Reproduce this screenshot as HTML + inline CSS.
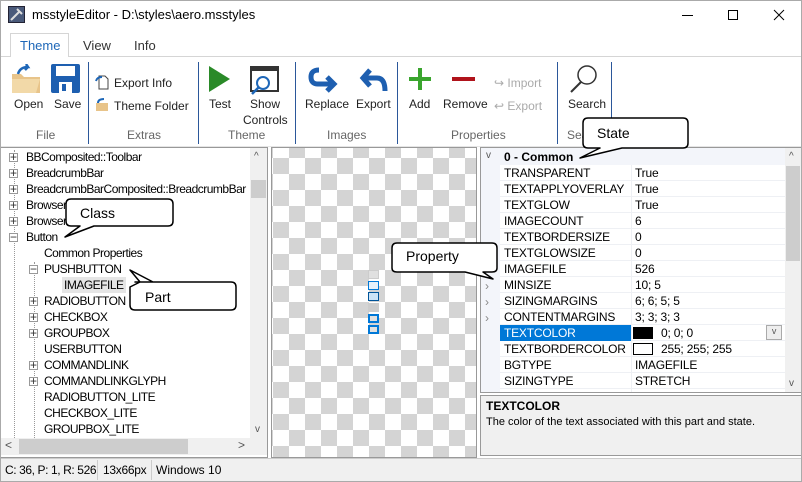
<!DOCTYPE html>
<html><head><meta charset="utf-8"><style>
*{margin:0;padding:0;box-sizing:border-box}
body{width:802px;height:482px;position:relative;overflow:hidden;background:#fff;font-family:"Liberation Sans",sans-serif;font-size:12px;color:#000}
.a{position:absolute;white-space:nowrap}
.sep{position:absolute;top:62px;width:1px;height:82px;background:#2b579a}
.gl{position:absolute;top:128px;color:#666;font-size:12px}
.bl{position:absolute;color:#222;font-size:12px}
.tree div{position:absolute;white-space:nowrap;font-size:12px;letter-spacing:-0.5px}
.pb{position:absolute;width:9px;height:9px;border:1px solid #999;background:#fff;font-size:9px;line-height:7px;text-align:center;color:#333;letter-spacing:0!important}
.row{position:absolute;left:500px;width:285px;height:16px;border-bottom:1px solid #eef0f4}
.row span{position:absolute;top:1px;font-size:12px;letter-spacing:-0.2px}
</style></head><body>
<div class="a" style="left:0;top:0;width:802px;height:482px;border:1px solid #aaa;pointer-events:none;z-index:9"></div>
<svg class="a" style="left:8px;top:6px" width="17" height="17"><rect x="0.5" y="0.5" width="16" height="16" fill="#4a5a7a" stroke="#223"/><path d="M3 14 L12 5 M9 3 L14 8" stroke="#ddd" stroke-width="2"/></svg>
<div class="a" style="left:32px;top:7px;font-size:13px">msstyleEditor - D:\styles\aero.msstyles</div>
<div class="a" style="left:682px;top:15px;width:11px;height:1px;background:#000"></div>
<div class="a" style="left:728px;top:10px;width:10px;height:10px;border:1px solid #000"></div>
<svg class="a" style="left:773px;top:9px" width="12" height="12"><path d="M1 1L11 11M11 1L1 11" stroke="#000"/></svg>
<div class="a" style="left:0;top:56px;width:802px;height:1px;background:#d5d5d5"></div>
<div class="a" style="left:10px;top:33px;width:59px;height:24px;border:1px solid #d5d5d5;border-bottom:none;background:#fff"></div>
<div class="a" style="left:20px;top:38px;color:#1e67b8;font-size:13px">Theme</div>
<div class="a" style="left:83px;top:38px;color:#333;font-size:13px">View</div>
<div class="a" style="left:134px;top:38px;color:#333;font-size:13px">Info</div>
<div class="sep" style="left:88px"></div><div class="sep" style="left:198px"></div><div class="sep" style="left:295px"></div><div class="sep" style="left:397px"></div><div class="sep" style="left:557px"></div><div class="sep" style="left:611px"></div>
<svg class="a" style="left:10px;top:64px" width="34" height="30"><path d="M2 10h9l3 3h16v16H2z" fill="#e8c48a"/><path d="M2 15h28l-4 14H2z" fill="#f2d9a8"/><path d="M8 10 q2-7 10-7 l-2-3 M18 3 l-3 3" stroke="#1e67b8" stroke-width="2.5" fill="none"/></svg>
<svg class="a" style="left:51px;top:64px" width="29" height="29"><rect x="0" y="0" width="29" height="29" rx="2" fill="#1e5fb0"/><rect x="5" y="2" width="19" height="10" fill="#fff"/><rect x="8" y="18" width="13" height="11" fill="#fff"/><rect x="11" y="20" width="4" height="7" fill="#1e5fb0"/></svg>
<div class="bl" style="left:14px;top:97px">Open</div><div class="bl" style="left:54px;top:97px">Save</div>
<div class="gl" style="left:36px">File</div>
<svg class="a" style="left:95px;top:75px" width="14" height="15"><path d="M4 1h6l3 3v10H4z" fill="#fff" stroke="#444"/><path d="M1 6q1-4 6-4" stroke="#1e67b8" stroke-width="2" fill="none"/></svg>
<div class="bl" style="left:114px;top:76px">Export Info</div>
<svg class="a" style="left:95px;top:98px" width="14" height="13"><path d="M1 5h12v8H1z" fill="#e8c48a"/><path d="M3 5q0-4 6-4" stroke="#1e67b8" stroke-width="2" fill="none"/></svg>
<div class="bl" style="left:114px;top:99px">Theme Folder</div>
<div class="gl" style="left:127px">Extras</div>
<svg class="a" style="left:209px;top:66px" width="22" height="26"><path d="M0 0L21 13L0 26z" fill="#2a8a28"/></svg>
<svg class="a" style="left:249px;top:66px" width="30" height="30"><rect x="2" y="1" width="27" height="24" fill="#fff" stroke="#333" stroke-width="2"/><rect x="2" y="1" width="27" height="4" fill="#333"/><circle cx="14" cy="17" r="6" fill="#fff" stroke="#1e67b8" stroke-width="2"/><path d="M10 21L3 28" stroke="#1e67b8" stroke-width="2.5"/></svg>
<div class="bl" style="left:209px;top:97px">Test</div>
<div class="bl" style="left:250px;top:97px">Show</div><div class="bl" style="left:243px;top:113px">Controls</div>
<div class="gl" style="left:228px">Theme</div>
<svg class="a" style="left:308px;top:66px" width="32" height="28"><path d="M11 4 Q3 4 3 11 Q3 18 10 18 H25" stroke="#1e5fb0" stroke-width="5" fill="none"/><path d="M19 11 L26 18 L19 25" stroke="#1e5fb0" stroke-width="5" fill="none"/></svg>
<svg class="a" style="left:357px;top:66px" width="32" height="28"><path d="M28 25 Q28 12 20 12 H6" stroke="#1e5fb0" stroke-width="5" fill="none"/><path d="M13 4 L6 12 L13 20" stroke="#1e5fb0" stroke-width="5" fill="none"/></svg>
<div class="bl" style="left:305px;top:97px">Replace</div><div class="bl" style="left:356px;top:97px">Export</div>
<div class="gl" style="left:327px">Images</div>
<svg class="a" style="left:408px;top:67px" width="24" height="24"><path d="M12 1v22M1 12h22" stroke="#3aa52e" stroke-width="4"/></svg>
<div class="a" style="left:452px;top:77px;width:23px;height:4px;background:#b0131b"></div>
<div class="bl" style="left:409px;top:97px">Add</div><div class="bl" style="left:443px;top:97px">Remove</div>
<div class="bl" style="left:494px;top:76px;color:#aaa">↪ Import</div>
<div class="bl" style="left:494px;top:99px;color:#aaa">↩ Export</div>
<div class="gl" style="left:451px">Properties</div>
<svg class="a" style="left:569px;top:64px" width="30" height="30"><circle cx="18" cy="11" r="9" fill="none" stroke="#333" stroke-width="1.5"/><path d="M12 18L2 28" stroke="#333" stroke-width="2"/></svg>
<div class="bl" style="left:568px;top:97px">Search</div>
<div class="gl" style="left:567px">Sea</div>
<div class="a" style="left:0;top:146px;width:802px;height:1px;background:#e5e5e5"></div>
<div class="a" style="left:0;top:147px;width:268px;height:311px;border:1px solid #999;background:#fff"></div>
<div class="a" style="left:14px;top:150px;height:288px;border-left:1px dotted #999"></div>
<div class="a" style="left:34px;top:262px;height:176px;border-left:1px dotted #999"></div>
<div class="tree">
<div class="pb" style="left:9px;top:153px">+</div><div style="left:26px;top:150px">BBComposited::Toolbar</div>
<div class="pb" style="left:9px;top:169px">+</div><div style="left:26px;top:166px">BreadcrumbBar</div>
<div class="pb" style="left:9px;top:185px">+</div><div style="left:26px;top:182px">BreadcrumbBarComposited::BreadcrumbBar</div>
<div class="pb" style="left:9px;top:201px">+</div><div style="left:26px;top:198px">Browser</div>
<div class="pb" style="left:9px;top:217px">+</div><div style="left:26px;top:214px">Browser</div>
<div class="pb" style="left:9px;top:233px">−</div><div style="left:26px;top:230px">Button</div>
<div style="left:44px;top:246px">Common Properties</div>
<div class="pb" style="left:29px;top:265px">−</div><div style="left:44px;top:262px">PUSHBUTTON</div>
<div style="left:62px;top:277px;background:#e5e5e5;padding:1px 2px">IMAGEFILE</div>
<div class="pb" style="left:29px;top:297px">+</div><div style="left:44px;top:294px">RADIOBUTTON</div>
<div class="pb" style="left:29px;top:313px">+</div><div style="left:44px;top:310px">CHECKBOX</div>
<div class="pb" style="left:29px;top:329px">+</div><div style="left:44px;top:326px">GROUPBOX</div>
<div style="left:44px;top:342px">USERBUTTON</div>
<div class="pb" style="left:29px;top:361px">+</div><div style="left:44px;top:358px">COMMANDLINK</div>
<div class="pb" style="left:29px;top:377px">+</div><div style="left:44px;top:374px">COMMANDLINKGLYPH</div>
<div style="left:44px;top:390px">RADIOBUTTON_LITE</div>
<div style="left:44px;top:406px">CHECKBOX_LITE</div>
<div style="left:44px;top:422px">GROUPBOX_LITE</div>
</div>
<div class="a" style="left:250px;top:148px;width:17px;height:290px;background:#f0f0f0"></div>
<div class="a" style="left:251px;top:180px;width:15px;height:18px;background:#cdcdcd"></div>
<div class="a" style="left:254px;top:151px;font-size:10px;color:#555">^</div>
<div class="a" style="left:255px;top:424px;font-size:10px;color:#555">v</div>
<div class="a" style="left:1px;top:438px;width:266px;height:17px;background:#f0f0f0"></div>
<div class="a" style="left:19px;top:439px;width:169px;height:15px;background:#cdcdcd"></div>
<div class="a" style="left:5px;top:438px;color:#555">&lt;</div><div class="a" style="left:238px;top:438px;color:#555">&gt;</div>
<div class="a" style="left:271px;top:147px;width:206px;height:311px;border:1px solid #999;background-color:#fff;background-image:conic-gradient(#d4d4d4 25%,#fff 0 50%,#d4d4d4 0 75%,#fff 0);background-size:32px 32px;background-position:1px -6px"></div>
<div class="a" style="left:368px;top:270px;width:11px;height:9px;background:#e0e0e0;border:1px solid #ccc"></div>
<div class="a" style="left:368px;top:281px;width:11px;height:9px;background:#e5f1fb;border:1px solid #0078d7"></div>
<div class="a" style="left:368px;top:292px;width:11px;height:9px;background:#cce4f7;border:1px solid #005499"></div>
<div class="a" style="left:368px;top:303px;width:11px;height:9px;background:#ccc;border:1px solid #ccc"></div>
<div class="a" style="left:368px;top:314px;width:11px;height:9px;background:#e1e1e1;border:2px solid #0078d7"></div>
<div class="a" style="left:368px;top:325px;width:11px;height:9px;background:#e1e1e1;border:2px solid #0078d7"></div>
<div class="a" style="left:480px;top:147px;width:322px;height:246px;border:1px solid #999;background:#fff"></div>
<div class="a" style="left:481px;top:148px;width:19px;height:244px;background:#f3f5fa"></div>
<div class="a" style="left:481px;top:148px;width:304px;height:17px;background:#f3f5fa"></div>
<div class="a" style="left:486px;top:150px;color:#555;font-size:10px">v</div>
<div class="a" style="left:504px;top:150px;font-weight:bold;font-size:12px">0 - Common</div>
<div class="a" style="left:785px;top:148px;width:16px;height:244px;background:#f0f0f0"></div>
<div class="a" style="left:786px;top:166px;width:14px;height:95px;background:#cdcdcd"></div>
<div class="a" style="left:789px;top:151px;font-size:10px;color:#555">^</div>
<div class="a" style="left:789px;top:378px;font-size:10px;color:#555">v</div>
<div class="a" style="left:631px;top:165px;width:1px;height:227px;background:#eef0f4"></div>
<div class="row" style="top:165px"><span style="left:4px">TRANSPARENT</span><span style="left:135px">True</span></div>
<div class="row" style="top:181px"><span style="left:4px">TEXTAPPLYOVERLAY</span><span style="left:135px">True</span></div>
<div class="row" style="top:197px"><span style="left:4px">TEXTGLOW</span><span style="left:135px">True</span></div>
<div class="row" style="top:213px"><span style="left:4px">IMAGECOUNT</span><span style="left:135px">6</span></div>
<div class="row" style="top:229px"><span style="left:4px">TEXTBORDERSIZE</span><span style="left:135px">0</span></div>
<div class="row" style="top:245px"><span style="left:4px">TEXTGLOWSIZE</span><span style="left:135px">0</span></div>
<div class="row" style="top:261px"><span style="left:4px">IMAGEFILE</span><span style="left:135px">526</span></div>
<div class="row" style="top:277px"><span style="left:4px">MINSIZE</span><span style="left:135px">10; 5</span></div>
<div class="row" style="top:293px"><span style="left:4px">SIZINGMARGINS</span><span style="left:135px">6; 6; 5; 5</span></div>
<div class="row" style="top:309px"><span style="left:4px">CONTENTMARGINS</span><span style="left:135px">3; 3; 3; 3</span></div>
<div class="row" style="top:325px"><span style="left:0;top:0;width:131px;height:16px;background:#0078d7"></span><span style="left:4px;color:#fff">TEXTCOLOR</span><span style="left:133px;top:2px;width:20px;height:12px;background:#000"></span><span style="left:161px">0; 0; 0</span><span style="left:266px;top:0;width:16px;height:15px;border:1px solid #aaa;background:#eee;font-size:9px;text-align:center;color:#555">v</span></div>
<div class="row" style="top:341px"><span style="left:133px;top:2px;width:20px;height:12px;border:1px solid #000"></span><span style="left:4px">TEXTBORDERCOLOR</span><span style="left:161px">255; 255; 255</span></div>
<div class="row" style="top:357px"><span style="left:4px">BGTYPE</span><span style="left:135px">IMAGEFILE</span></div>
<div class="row" style="top:373px"><span style="left:4px">SIZINGTYPE</span><span style="left:135px">STRETCH</span></div>
<div class="a" style="left:485px;top:279px;color:#888">›</div>
<div class="a" style="left:485px;top:295px;color:#888">›</div>
<div class="a" style="left:485px;top:311px;color:#888">›</div>
<div class="a" style="left:480px;top:395px;width:322px;height:61px;border:1px solid #999;background:#f0f0f0"></div>
<div class="a" style="left:486px;top:399px;font-weight:bold;font-size:12px">TEXTCOLOR</div>
<div class="a" style="left:486px;top:416px;font-size:11px">The color of the text associated with this part and state.</div>
<div class="a" style="left:0;top:458px;width:802px;height:24px;background:#f0f0f0;border-top:1px solid #ccc"></div>
<div class="a" style="left:5px;top:463px;letter-spacing:-0.4px">C: 36, P: 1, R: 526</div>
<div class="a" style="left:97px;top:460px;width:1px;height:20px;background:#ccc"></div>
<div class="a" style="left:103px;top:463px;letter-spacing:-0.3px">13x66px</div>
<div class="a" style="left:151px;top:460px;width:1px;height:20px;background:#ccc"></div>
<div class="a" style="left:156px;top:463px">Windows 10</div>
<svg class="a" style="left:0;top:0;z-index:5" width="802" height="482">
<g fill="#fff" stroke="#000" stroke-width="1.5" stroke-linejoin="round">
<path d="M588 118 H683 Q688 118 688 123 V143 Q688 148 683 148 H622 L580 158 L600 148 H588 Q583 148 583 143 V123 Q583 118 588 118 Z"/>
<path d="M71 199 H168 Q173 199 173 204 V221 Q173 226 168 226 H94 L65 237 L80 226 H71 Q66 226 66 221 V204 Q66 199 71 199 Z"/>
<path d="M397 243 H492 Q497 243 497 248 V268 Q497 272 492 272 H483 L493 279 L465 272 H397 Q392 272 392 268 V248 Q392 243 397 243 Z"/>
<path d="M135 282 H231 Q236 282 236 287 V305 Q236 310 231 310 H135 Q130 310 130 305 V287 L140 282 L130 270 L153 282 Z"/>
</g>
<g font-family="Liberation Sans,sans-serif" font-size="14" fill="#000">
<text x="597" y="138">State</text><text x="80" y="218">Class</text><text x="406" y="261">Property</text><text x="145" y="302">Part</text>
</g></svg>
</body></html>
